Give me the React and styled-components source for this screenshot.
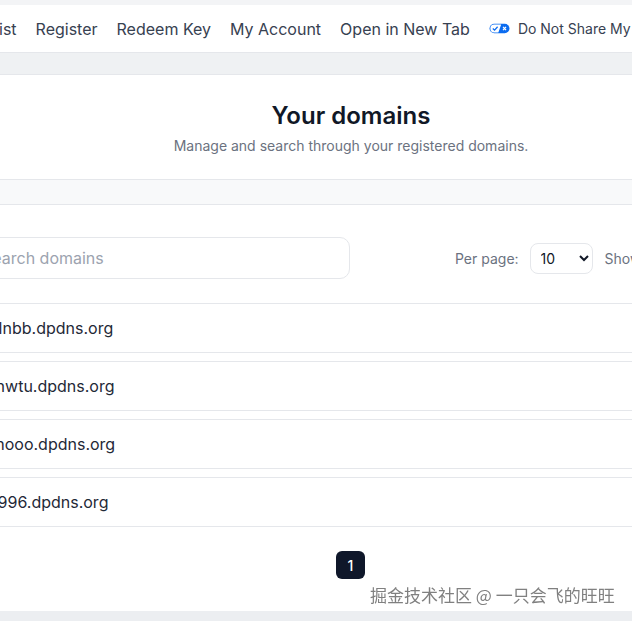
import React from 'react';
import styled, { createGlobalStyle } from 'styled-components';

const GlobalStyle = createGlobalStyle`
  html, body {
    margin: 0;
    padding: 0;
    background: #f3f4f6;
    overflow: hidden;
  }
  body {
    font-family: Inter, 'Noto Sans', sans-serif;
  }
`;

const Page = styled.div`
  margin-left: -100px;
  width: 902px;
  padding-top: 5px;
  background: #f3f4f6;
  position: relative;
`;

const Nav = styled.nav`
  height: 47px;
  background: #fff;
  border-bottom: 1px solid #e5e7eb;
  display: flex;
  align-items: center;
  padding-left: 28px;
  gap: 19px;
  white-space: nowrap;
`;

const NavLink = styled.a`
  font-size: ${(p) => (p.small ? 14 : 16)}px;
  color: #374151;
  text-decoration: none;
  display: flex;
  align-items: center;
  gap: 8px;
`;

const Band = styled.div`
  height: ${(p) => p.h}px;
  background: ${(p) => p.bg};
  border-bottom: 1px solid #e5e7eb;
`;

const Header = styled.header`
  background: #fff;
  text-align: center;
  padding: 25px 0 23px;
  border-bottom: 1px solid #e5e7eb;
`;

const Title = styled.h1`
  margin: 0;
  font-size: 24px;
  line-height: 32px;
  font-weight: 600;
  color: #111827;
`;

const Subtitle = styled.p`
  margin: 4px 0 0;
  font-size: 14px;
  line-height: 20px;
  color: #6b7280;
`;

const Card = styled.section`
  background: #fff;
  padding: 32px 60px 32px;
`;

const Toolbar = styled.div`
  display: flex;
  align-items: center;
  padding-bottom: 24px;
  border-bottom: 1px solid #e5e7eb;
  white-space: nowrap;
`;

const SearchInput = styled.input`
  box-sizing: border-box;
  width: 390px;
  height: 42px;
  border: 1px solid #e5e7eb;
  border-radius: 10px;
  padding: 0 14px 0 21px;
  font-family: inherit;
  font-size: 16px;
  color: #111827;
  outline: none;
  &::placeholder {
    color: #9ca3af;
  }
`;

const Controls = styled.div`
  display: flex;
  align-items: center;
  margin-left: 105px;
  gap: 12px;
`;

const Label = styled.span`
  font-size: 14px;
  color: #6b7280;
`;

const Select = styled.select`
  box-sizing: border-box;
  width: 63px;
  height: 31px;
  margin-left: -1px;
  border: 1px solid #e5e7eb;
  border-radius: 8px;
  background: #fff;
  padding: 0 6px;
  font-family: inherit;
  font-size: 14px;
  color: #111827;
`;

const List = styled.ul`
  list-style: none;
  margin: 0;
  padding: 0;
  display: flex;
  flex-direction: column;
  gap: 8px;
`;

const Row = styled.li`
  height: 48px;
  display: flex;
  align-items: center;
  padding: 0 16px;
  border-top: ${(p) => (p.first ? 'none' : '1px solid #e5e7eb')};
  border-bottom: 1px solid #e5e7eb;
  font-size: 16px;
  color: #1f2937;
  white-space: nowrap;
`;

const Pager = styled.div`
  display: flex;
  justify-content: center;
  margin-top: 24px;
`;

const PageButton = styled.button`
  width: 29px;
  height: 28px;
  margin-left: -1px;
  border: none;
  border-radius: 6px;
  background: #0f172a;
  color: #fff;
  font-family: inherit;
  font-size: 14px;
  font-weight: 500;
  padding: 0;
`;

const Bottom = styled.div`
  height: 20px;
  background: #eceef1;
`;

const Watermark = styled.div`
  position: fixed;
  left: 370px;
  top: 582px;
  font-family: 'Noto Sans CJK SC', sans-serif;
  font-size: 17px;
  color: #808080;
  white-space: nowrap;
  text-shadow: 0 0 2px #fff, 0 0 2px #fff;
`;

function PrivacyIcon() {
  return (
    <svg width="21" height="11" viewBox="0 0 20 10">
      <rect x="0.5" y="0.5" width="19" height="9" rx="4.5" fill="#0b6cf0" />
      <path d="M5 1.3 H11.6 L8.9 8.7 H5 A3.7 3.7 0 0 1 5 1.3 Z" fill="#fff" />
      <path d="M3.6 5 L5.3 6.6 L8.2 3.3" stroke="#0b6cf0" strokeWidth="1.2" fill="none" />
      <path d="M13.4 3.4 L16.2 6.6 M16.2 3.4 L13.4 6.6" stroke="#fff" strokeWidth="1.2" />
    </svg>
  );
}

const domains = ['wdlnbb.dpdns.org', 'dqnwtu.dpdns.org', 'qhhooo.dpdns.org', 'ws996.dpdns.org'];

export default function App() {
  return (
    <>
      <GlobalStyle />
      <Page>
        <Nav>
          <NavLink>Domain List</NavLink>
          <NavLink>Register</NavLink>
          <NavLink>Redeem Key</NavLink>
          <NavLink>My Account</NavLink>
          <NavLink>Open in New Tab</NavLink>
          <NavLink small>
            <PrivacyIcon />
            Do Not Share My Info
          </NavLink>
        </Nav>
        <Band h={21} bg="#eff1f3" />
        <Header>
          <Title>Your domains</Title>
          <Subtitle>Manage and search through your registered domains.</Subtitle>
        </Header>
        <Band h={24} bg="#f8f9fa" />
        <Card>
          <Toolbar>
            <SearchInput placeholder="Search domains" />
            <Controls>
              <Label>Per page:</Label>
              <Select defaultValue="10">
                <option value="10">10</option>
                <option value="25">25</option>
                <option value="50">50</option>
              </Select>
              <Label>Showing 4 of 4</Label>
            </Controls>
          </Toolbar>
          <List>
            {domains.map((d, i) => (
              <Row key={d} first={i === 0 ? 1 : 0}>{d}</Row>
            ))}
          </List>
          <Pager>
            <PageButton>1</PageButton>
          </Pager>
        </Card>
        <Bottom />
      </Page>
      <Watermark>掘金技术社区 @ 一只会飞的旺旺</Watermark>
    </>
  );
}
